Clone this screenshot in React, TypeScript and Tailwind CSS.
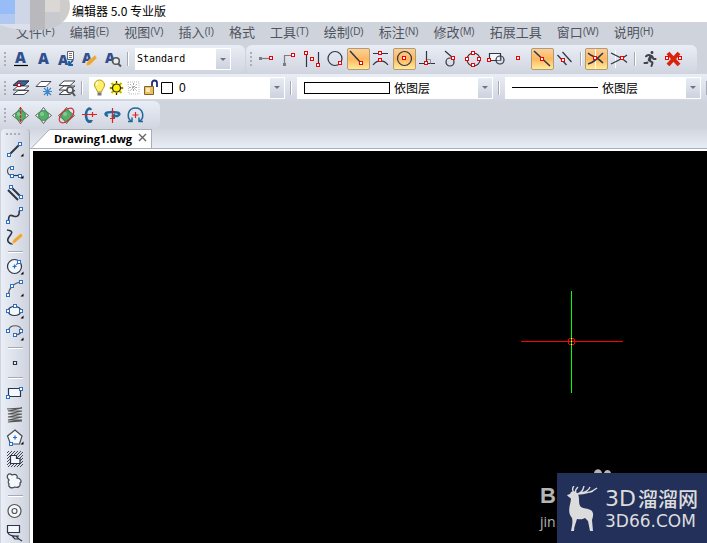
import React from 'react';
import { FaRunning } from 'react-icons/fa';
import { clsx } from 'clsx';

const INK = '#2c3646';
const BLUE = '#2f6fc0';

/* Snap handle, drawn as a hollow square centred on x/y */
const Dot = ({ x, y, c = '#f00000' }: { x: number; y: number; c?: string }) => (
  <rect x={x - 0.5} y={y - 0.5} width="3" height="3" fill="#fff" stroke={c} strokeWidth="1" />
);

const Node = ({ x, y }: { x: number; y: number }) => <Dot x={x - 1} y={y} c={BLUE} />;

const Glyph = ({ children }: { children: React.ReactNode }) => (
  <svg viewBox="0 0 23 22" width="23" height="22" fill="none" stroke={INK} strokeWidth="1.2" aria-hidden="true">
    {children}
  </svg>
);

interface Tool {
  name: string;
  icon: React.ReactNode;
  active?: boolean;
  flyout?: boolean;
}

const ToolButton = ({ tool }: { tool: Tool }) => (
  <button
    type="button"
    title={tool.name}
    aria-label={tool.name}
    className={clsx(
      'flex h-[22px] w-[23px] shrink-0 items-center justify-center',
      tool.active && 'rounded-xs bg-linear-to-b from-[#f9d3a0] via-[#fdb75c] to-[#fff0a0] outline -outline-offset-1 outline-[#b39a72]'
    )}
  >
    <Glyph>
      {tool.icon}
      {tool.flyout && <path d="M20.500 15.500v3h-3z" fill="#000" stroke="none" />}
    </Glyph>
  </button>
);

const Grip = () => (
  <div className="flex w-[9px] shrink-0 flex-col items-center gap-[2px]">
    {[0, 1, 2, 3].map((i) => (
      <span key={i} className="h-[2px] w-[2px] bg-[#a9aeb9]" />
    ))}
  </div>
);

const Divider = () => (
  <div className="flex w-2 shrink-0 justify-center">
    <span className="h-[14px] w-[2px] border-r border-l border-r-white border-l-[#a4a9b3]" />
  </div>
);

const A = ({ x = 6, y = 16, size = 15 }: { x?: number; y?: number; size?: number }) => (
  <text x={x} y={y} fontFamily="Open Sans, DejaVu Sans, sans-serif" fontWeight="800" fontSize={size} fill="#2f4f8e" stroke="none">
    A
  </text>
);

const Layers = () => (
  <g strokeWidth="1" stroke="#444b55" fill="#fff">
    <path d="M4 17.500h11l5-4H9z" />
    <path d="M4 13h11l5-4H9z" />
    <path d="M4 8.500h11l5-4.500H9z" />
  </g>
);

const textTools: Tool[] = [
  { name: 'Text style', icon: <><A y={15} /><path d="M5 17.500h14" stroke="#000" /></> },
  { name: 'Single line text', icon: <A /> },
  {
    name: 'Multiline text',
    icon: (
      <>
        <A x={3} y={17} size={14} />
        <path d="M12.500 3.500h6v8h-6z" fill="#fff" stroke="#666" strokeWidth="1" />
        <path d="M14 5.500h3M14 7.500h3M14 9.500h3" stroke="#777" strokeWidth="1" />
        <path d="M18 12l-4 5m0-4v4h4" stroke="#1d5f9e" strokeWidth="1.800" />
      </>
    ),
  },
  { name: 'Edit text', icon: <><A x={4} y={15} size={14} /><path d="M8 18l1-4 8-7 2 3-7 7z" fill="#eda63a" stroke="#f9dca8" strokeWidth="0.6" /></> },
  { name: 'Find text', icon: <><A x={4} y={15} size={14} /><circle cx="15" cy="13" r="3.300" fill="#e9eef5" stroke="#555" strokeWidth="1.500" /><path d="M17 15.500l3 3" stroke="#555" strokeWidth="2" /></> },
];

const snapTools: Tool[] = [
  { name: 'Snap tracking', icon: <><path d="M4 10.500h12" stroke="#7d7d7d" /><path d="M4 9h3v3H4z" fill="#7d7d7d" stroke="none" /><Dot x={15} y={9} /></> },
  { name: 'Snap from', icon: <><path d="M6.500 16V7.500H15" stroke="#7d7d7d" /><path d="M5 15h3v3H5z" fill="#7d7d7d" stroke="none" /><Dot x={14} y={6} /></> },
  { name: 'Mid between points', icon: <><path d="M5.500 5v14M17.500 4v13" /><Dot x={4} y={4} /><Dot x={10} y={10} /><Dot x={16} y={16} /></> },
  { name: 'Nearest', icon: <><circle cx="11" cy="10.500" r="7" /><Dot x={15} y={14} /></> },
  { name: 'Endpoint', active: true, icon: <><path d="M3 3l11 12" strokeWidth="1.500" /><Dot x={13} y={14} /></> },
  { name: 'Apparent intersection', icon: <><path d="M3 5.500h15M3 17c4-5.500 11-5.500 15 0" /><Dot x={9} y={4} /><Dot x={9} y={11} /></> },
  { name: 'Center', active: true, icon: <><circle cx="11.500" cy="10.500" r="7" /><Dot x={10} y={9} /></> },
  { name: 'Perpendicular', icon: <><path d="M3 15.500h16M10.500 3v12" /><path d="M11 11.500h3.500v4" stroke="#9a8f8c" strokeWidth="1" /><Dot x={9} y={14} /></> },
  { name: 'Tangent', icon: <><circle cx="11" cy="14" r="4" /><path d="M6 3l8 7" /><Dot x={13} y={9} /></> },
  { name: 'Quadrant', icon: <><circle cx="11.500" cy="11.500" r="6.500" /><Dot x={10} y={4} /><Dot x={4} y={10} /><Dot x={16} y={10} /><Dot x={10} y={16} /></> },
  { name: 'Insertion', icon: <><path d="M4.500 5.500h11v7h-11z" fill="#f4f6fa" /><circle cx="15" cy="12" r="4" /><path d="M12 12.500h4v-4" strokeWidth="1" stroke="#66707c" /><Dot x={3} y={11} /></> },
  { name: 'Node', icon: <Dot x={9} y={9} /> },
  { name: 'Nearest on line', active: true, icon: <><path d="M3 3l16 15" strokeWidth="1.500" /><Dot x={10} y={10} /></> },
  { name: 'Parallel', icon: <><path d="M3.500 7l9 10M8.500 4l9 10" /><Dot x={8} y={11} /></> },
];

const crossTools: Tool[] = [
  { name: 'Intersection', active: true, icon: <><path d="M10.500 1v20" stroke="#fff" strokeWidth="1" /><path d="M3 5c4 4 10 4 15 10M3 16c5-1 9-5 15-11" strokeWidth="1.500" /><Dot x={9} y={9} /></> },
  { name: 'Extension', icon: <><path d="M7.500 2v18" stroke="#fff" strokeWidth="1" /><path d="M3 5l11 5.500L3 16M19 7l-5 3.500 5 4" /><Dot x={13} y={9} /></> },
];

const snapEndTools: Tool[] = [
  { name: 'Quick snap', icon: <g stroke="none" color="#3e454c"><FaRunning x="3" y="3" width="16" height="16" size={16} /></g> },
  { name: 'No snap', icon: <><path d="M6 5l11 12M17 5L6 17" stroke="#d9240c" strokeWidth="4" /><Dot x={4} y={9} /><Dot x={17} y={9} /></> },
];

const layerTools: Tool[] = [
  { name: 'Layer manager', icon: <><Layers /><path d="M4 8.500h11l5-4.500H9z" fill="#2c67a8" strokeWidth="1" /><Dot x={9} y={7} /></> },
  {
    name: 'Freeze layer',
    icon: <><path d="M4 9.500h10l5-5H9z" fill="#fff" stroke="#444b55" strokeWidth="1" /><path d="M15.500 10v9M11 14.500h9M12 11l7 7M19 11l-7 7" stroke="#3d87cc" /></>,
  },
  { name: 'Search layers', icon: <><Layers /><circle cx="15" cy="13" r="3" fill="#e9eef5" stroke="#555" strokeWidth="1.600" /><path d="M17 15l3 4" stroke="#555" strokeWidth="2" /></> },
];

const Ball = () => (
  <>
    <path d="M11.500 3.500l3 4 5 4-5 4-3 4-3-4-5-4 5-4z" fill="#fff" stroke="#555" strokeWidth="1" />
    <circle cx="11.500" cy="11.500" r="5" fill="#55ae6a" stroke="#398b50" strokeWidth="1" />
    <circle cx="10" cy="10" r="2" fill="#80cb92" stroke="none" />
  </>
);

const orbitTools: Tool[] = [
  { name: 'Constrained orbit', icon: <><Ball /><path d="M11.500 3v17" stroke="#e02020" strokeDasharray="3 1" /></> },
  { name: 'Free orbit', icon: <Ball /> },
  { name: 'Continuous orbit', icon: <><Ball /><ellipse cx="11.500" cy="11.500" rx="9" ry="5" transform="rotate(-45 11.500 11.500)" stroke="#c83030" /></> },
  { name: 'Rotate X', icon: <><path d="M13 6c-1-3-5-1-5 5s4 9 5 5" stroke="#22699b" strokeWidth="2.500" /><path d="M10 16h5l-2 3z" fill="#22699b" stroke="none" /><path d="M4 10.500h15M14.500 8v5" stroke="#e02020" /></> },
  { name: 'Rotate Y', icon: <><path d="M7 12c-5-2-2-4 4.500-4s9 2 5 4h-4" stroke="#22699b" strokeWidth="2.500" /><path d="M14 9v6l-4-3z" fill="#22699b" stroke="none" /><path d="M11.500 4v15M9 14.500h5" stroke="#e02020" /></> },
  { name: 'Rotate Z', icon: <><path d="M7 17C2 13 4 4 11.500 4S21 13 16 17M4 17.500h4v-4M19 17.500h-4v-4" stroke="#22699b" strokeWidth="1.500" /><path d="M11.500 8v6M8.500 11h6" stroke="#e02020" /></> },
];

const drawGroups: Tool[][] = [
  [
    { name: 'Line', flyout: true, icon: <><path d="M6 17L18 5" strokeWidth="2" /><Node x={6} y={16} /><Node x={17} y={5} /></> },
    { name: 'Polyline', flyout: true, icon: <><path d="M9 7C3 7 3 15 9 15.500h8" stroke="#555" /><path d="M9 15.500h8" /><Node x={9} y={7} /><Node x={9} y={15} /><Node x={17} y={15} /></> },
    { name: 'Parallel lines', icon: <><path d="M8 5l10 10M5 8l10 10" strokeWidth="2" /><Node x={8} y={4} /><Node x={18} y={14} /></> },
    { name: 'Spline', icon: <><path d="M5.500 17c0-11 6-2 9-5 4-3-1-4 4-7" strokeWidth="1.600" /><Node x={5} y={17} /><Node x={18} y={4} /></> },
    { name: 'Freehand', icon: <><path d="M4 4c7 1 5 3 2 7s0 7 4 7" strokeWidth="1.600" /><path d="M9 18l1-4 8-7 2 3-8 7z" fill="#eda63a" stroke="#f9dca8" strokeWidth="0.6" /></> },
  ],
  [
    { name: 'Circle', flyout: true, icon: <><circle cx="11.500" cy="10.500" r="7" fill="#f4f7fc" /><path d="M11.500 10.500l5-5" stroke={BLUE} strokeDasharray="1.500 1" /><path d="M9.500 10.500h4M11.500 8.500v4" stroke={BLUE} /><Node x={16} y={5} /></> },
    { name: 'Arc', flyout: true, icon: <><path d="M5.500 17c0-6 4-12 13-13" stroke="#555" /><Node x={5} y={16} /><Node x={9} y={7} /><Node x={18} y={3} /></> },
    { name: 'Ellipse', flyout: true, icon: <><ellipse cx="11.500" cy="11" rx="6.500" ry="4.500" fill="#f4f7fc" /><Node x={5} y={10} /><Node x={12} y={5} /><Node x={18} y={10} /></> },
    { name: 'Elliptical arc', flyout: true, icon: <><path d="M5.500 9c0-7 13-7 13 0 0 2-3 3.500-6 4" stroke="#555" /><Node x={5} y={8} /><Node x={18} y={8} /><Node x={12} y={12} /></> },
  ],
  [{ name: 'Point', icon: <path d="M10.500 9.500h3v3h-3z" fill="#fff" /> }],
  [
    { name: 'Rectangle', icon: <><path d="M5.500 6.500h12v8h-12z" fill="#f4f7fc" /><Node x={5} y={14} /><Node x={18} y={6} /></> },
    { name: 'Hatch', icon: <path d="M4 5l15-1-14 3 14 0-14 3 14 0-14 3 14 0-14 3 14 0-14 2 14-1" stroke="#555" strokeWidth="1.200" /> },
    { name: 'Polygon', flyout: true, icon: <><path d="M12 4l7 6-2.500 8h-9L4.500 10z" fill="#f4f7fc" stroke="#444b55" /><path d="M10 11.500h4M12 9.500v4" stroke={BLUE} /><Node x={8} y={17} /></> },
    {
      name: 'Boundary',
      icon: (
        <>
          <pattern id="hatch" width="3" height="3" patternUnits="userSpaceOnUse">
            <path d="M0 3L3 0M-1 1l2-2M2 4l2-2" stroke={INK} strokeWidth="0.9" />
          </pattern>
          <path d="M4 3h16v16H4z" fill="url(#hatch)" stroke="none" />
          <path d="M7.500 7.500h6v3H17v5H7.500z" fill="#f4f7fc" />
        </>
      ),
    },
    { name: 'Revision cloud', icon: <path d="M6 10C2 6 6 2 9 5c4-2 6 1 5 3 4 0 5 4 3 5 1 4-3 5-5 4-4 2-7 0-6-3-1-1-1-3 0-4z" fill="#f4f7fc" stroke="#444b55" /> },
  ],
  [
    { name: 'Donut', icon: <><circle cx="11.500" cy="11" r="6.500" fill="#f4f7fc" stroke="#555" /><circle cx="11.500" cy="11" r="2.500" stroke="#555" /></> },
    { name: 'Wipeout', icon: <><path d="M4.500 3.500h12v7h-12z" fill="#f4f7fc" /><path d="M5 11c2 4 7 3 11 3M9 14l3 3h4l3 2M13 14l3 3" /></> },
  ],
];

const menus = [
  ['文件', '(F)'],
  ['编辑', '(E)'],
  ['视图', '(V)'],
  ['插入', '(I)'],
  ['格式', ''],
  ['工具', '(T)'],
  ['绘制', '(D)'],
  ['标注', '(N)'],
  ['修改', '(M)'],
  ['拓展工具', ''],
  ['窗口', '(W)'],
  ['说明', '(H)'],
];

const BAR = 'flex items-center bg-linear-to-b from-[#e9edf6] to-[#d0d5df]';

interface ComboProps {
  label: string;
  value: string;
  className: string;
  textClass: string;
  children?: React.ReactNode;
}

const Combo = ({ label, value, className, textClass, children }: ComboProps) => (
  <div className={clsx('relative flex h-[22px] items-center bg-white text-black', className)}>
    {children}
    <select aria-label={label} className={clsx('h-full min-w-0 flex-1 appearance-none bg-transparent outline-none', textClass)}>
      <option>{value}</option>
    </select>
    <span className="pointer-events-none absolute inset-y-px right-px flex w-[14px] items-center justify-center bg-linear-to-b from-[#e8ecf4] to-[#ccd2de]">
      <svg width="6" height="3" viewBox="0 0 6 3" aria-hidden="true">
        <path d="M0 0h6L3 3z" fill="#70737a" />
      </svg>
    </span>
  </div>
);

const LayerState = () => (
  <svg width="86" height="20" viewBox="0 0 86 20" fill="none" className="shrink-0" aria-hidden="true">
    <path d="M8.500 14C8 11 5.500 10 5.500 7a5 5 0 0110 0c0 3-2.500 4-3 7z" fill="#fdf06a" stroke="#b79a20" />
    <path d="M8.500 14.500h4v3h-4z" fill="#777" />
    <path d="M8.500 4c-1 1-1 2-1 3" stroke="#fff" strokeWidth="1.500" />
    <path d="M27.500 3v14M20.500 10h14M22.500 5l10 10M32.500 5l-10 10" stroke="#f7e800" strokeWidth="2.500" />
    <circle cx="27.500" cy="10" r="4" fill="#fff200" stroke="#222" strokeWidth="1.200" />
    <path d="M27.500 3v2M27.500 15v2M21 10h2M32 10h2M23 5.500l1 1M32 5.500l-1 1M23 14.500l1-1M32 14.500l-1-1" stroke="#222" />
    <path d="M39 4h11v12H40z" stroke="#bbb" strokeDasharray="1 1" />
    <path d="M44.500 5v9M40 9.500h9M41 6l7 7M48 6l-7 7" stroke="#aaa" strokeDasharray="2 1" />
    <path d="M63 9V5a2.500 2.500 0 015 0v4" stroke="#202c78" strokeWidth="1.800" />
    <path d="M55.500 8.500h9v8h-9z" fill="#e9bf69" stroke="#866224" />
    <path d="M57 10h4v4h-4z" fill="#ffe9b0" />
    <path d="M72.500 4.500h11v11h-11z" fill="#fff" stroke="#000" />
  </svg>
);

/* Pixelated cover over the application icon */
const Mosaic = () => (
  <svg className="absolute top-0 left-0" width="71" height="31" viewBox="0 0 71 31" aria-hidden="true">
    <clipPath id="cover">
      <path d="M0 0h69c3 12-3 22-14 27C42 31 18 32 0 25z" />
    </clipPath>
    <g clipPath="url(#cover)">
      <path d="M0 0h71v31H0z" fill="#cfd1d8" />
      <path d="M0 0h15v14H0z" fill="#98bcf6" />
      <path d="M0 14h15v10H0z" fill="#b1c9f0" />
      <path d="M15 0h15v31H15z" fill="#cfd6e8" />
      <path d="M30 0h15v31H30z" fill="#b9b8bd" />
      <path d="M45 0h15v12H45z" fill="#dad7d4" />
      <path d="M45 12h15v19H45z" fill="#c9cad0" />
      <path d="M60 0h11v31H60z" fill="#cfcdcb" />
      <path d="M0 24h30v7H0z" fill="#dbe0ec" />
    </g>
  </svg>
);

const Watermark = () => (
  <div className="absolute right-0 bottom-0 flex items-end">
    <div className="w-[17px] text-[#b5b5b5]">
      <div className="font-['Liberation_Sans'] text-[22px] leading-8 font-bold">B</div>
      <div className="pb-3 font-['Open_Sans'] text-[14px] leading-5">jin</div>
    </div>
    <div className="relative flex h-[71px] w-[150px] items-center bg-[#22305a] text-[#dcdcdc]">
      <svg className="absolute -top-1 left-9" width="22" height="4" viewBox="0 0 22 4" aria-hidden="true">
        <path d="M1 4c1-5 7-5 8 0zM11 4c1-4 6-4 7 0z" fill="#b5b5b5" />
      </svg>
      <svg className="ml-2 shrink-0" width="34" height="46" viewBox="0 0 34 46" aria-hidden="true">
        <path
          d="M2 9l3-1 1-2 3-1 4 3c2 5 0 10 3 13 3 2 8 1 11 4 2 3 1 6 0 9l1 11h-3l-2-10-3-3c-3 2-6 1-8 1-1 4-3 7-3 12H6c1-5 2-9 1-13-5-6-2-12-1-19-1-2-3-2-4-4z"
          fill="currentColor"
        />
        <path d="M9 7C7 4 7 2 9 0M11 8c-1-4 0-5 2-7M11 8c4 0 7-3 8-8M12 8c7 0 15-2 20-6M16 7c5-1 8-3 9-6M20 6c3 1 6 0 8-1" fill="none" stroke="currentColor" strokeWidth="1.400" />
      </svg>
      <div className="ml-[6px] whitespace-nowrap">
        <div className="flex items-center gap-[2px] leading-6">
          <span className="font-['DejaVu_Sans'] text-[22px]">3D</span>
          <span className="font-['Noto_Sans_CJK_SC'] text-[20px] font-medium">溜溜网</span>
        </div>
        <div className="font-['DejaVu_Sans'] text-[17px] leading-5">3D66.COM</div>
      </div>
    </div>
  </div>
);

const App: React.FC = () => (
  <div className="relative flex min-h-screen flex-col overflow-hidden bg-[#cfd3dc] font-['Liberation_Sans','Noto_Sans_CJK_SC',sans-serif] text-xs">
    {/* Title bar */}
    <header className="flex h-[22px] items-center bg-white pl-[72px] font-['Noto_Sans_CJK_SC',sans-serif] text-black">
      <h1>编辑器 5.0 专业版</h1>
    </header>

    {/* Menu bar */}
    <nav className="flex h-[23px] items-start gap-[15px] pl-4 whitespace-nowrap text-[#50545f]">
      {menus.map(([label, key]) => (
        <button key={label} type="button" className="flex items-center">
          <span className="font-['Noto_Sans_CJK_SC',sans-serif] text-[13px] leading-5">{label}</span>
          {key && <span className="text-[10px] leading-5">{key}</span>}
        </button>
      ))}
    </nav>
    <Mosaic />

    {/* Toolbars */}
    <div className="flex h-7">
      <div className={clsx(BAR, 'w-[245px] shrink-0 rounded-r-md')}>
        <Grip />
        {textTools.map((t) => <ToolButton key={t.name} tool={t} />)}
        <Divider />
        <Combo label="Text style" value="Standard" className="ml-[3px] w-24" textClass="pl-[2px] font-['DejaVu_Sans_Mono'] text-[10px]" />
      </div>
      <div className={clsx(BAR, 'ml-px rounded-md pr-3')}>
        <Grip />
        {snapTools.map((t) => <ToolButton key={t.name} tool={t} />)}
        <Divider />
        {crossTools.map((t) => <ToolButton key={t.name} tool={t} />)}
        <Divider />
        {snapEndTools.map((t) => <ToolButton key={t.name} tool={t} />)}
      </div>
    </div>

    <div className={clsx(BAR, 'h-7 border-t border-[#d0d4dd]')}>
      <Grip />
      {layerTools.map((t) => <ToolButton key={t.name} tool={t} />)}
      <Divider />
      <Combo label="Layer" value="0" className="ml-[3px] flex-1" textClass="pl-1 text-xs">
        <LayerState />
      </Combo>
      <div className="ml-[2px]"><Divider /></div>
      <Combo label="Color" value="依图层" className="ml-[2px] flex-1" textClass="pl-1 font-['Noto_Sans_CJK_SC'] text-xs">
        <span className="ml-[7px] h-3 w-[86px] shrink-0 border border-black" />
      </Combo>
      <div className="ml-[2px]"><Divider /></div>
      <Combo label="Line type" value="依图层" className="ml-[2px] flex-1" textClass="pl-1 font-['Noto_Sans_CJK_SC'] text-xs">
        <span className="ml-[7px] h-px w-[86px] shrink-0 bg-black" />
      </Combo>
      <div className="ml-[2px] w-1 overflow-hidden"><Divider /></div>
    </div>

    <div className="flex h-7">
      <div className={clsx(BAR, 'rounded-r-md pr-[13px]')}>
        <Grip />
        {orbitTools.map((t) => <ToolButton key={t.name} tool={t} />)}
      </div>
    </div>

    {/* Workspace */}
    <main className="flex flex-1">
      <aside className="ml-px w-[29px] shrink-0 rounded-t-sm border-r border-[#a9afba] bg-linear-to-r from-[#eaeef6] to-[#ced3de] pl-[2px]">
        <div className="flex h-[9px] items-center gap-[2px] pl-[3px]">
          {[0, 1, 2, 3].map((i) => (
            <span key={i} className="h-[2px] w-[2px] bg-[#a9aeb9]" />
          ))}
        </div>
        {drawGroups.map((group, i) => (
          <React.Fragment key={i}>
            {i > 0 && (
              <div className="flex h-2 items-center pl-[5px]">
                <span className="h-[2px] w-[15px] border-t border-b border-t-[#a4a9b3] border-b-white" />
              </div>
            )}
            {group.map((t) => <ToolButton key={t.name} tool={t} />)}
          </React.Fragment>
        ))}
      </aside>

      <section className="flex min-w-0 flex-1 flex-col">
        <div className="flex h-5 items-end border-b border-[#a9afba] bg-linear-to-b from-[#d2d6df] to-[#e8ecf4]">
          <svg width="21" height="19" viewBox="0 0 21 19" aria-hidden="true">
            <path d="M2 19L18 2q1-1.500 3-1.500V19z" fill="#fff" />
            <path d="M2 18.500L18 2q1-1.500 3-1.500" fill="none" stroke="#a9afba" />
          </svg>
          <div className="flex h-[19px] items-center gap-[6px] border-t border-r border-[#a9afba] bg-white pr-1 pl-[3px]">
            <span className="font-['Open_Sans'] text-[11px] leading-4 font-bold text-black">Drawing1.dwg</span>
            <button type="button" aria-label="Close drawing" className="pb-1">
              <svg width="9" height="9" viewBox="0 0 9 9" stroke="#666" strokeWidth="1.400" aria-hidden="true">
                <path d="M1 1l7 7M8 1L1 8" />
              </svg>
            </button>
          </div>
        </div>
        <div className="flex flex-1 border-t-2 border-l-[3px] border-white">
          <div className="relative flex-1 bg-black">
            <svg className="absolute top-[140px] left-[488px]" width="102" height="102" viewBox="0 0 102 102" shapeRendering="crispEdges" aria-label="Cursor">
              <path d="M0 50.500h102" stroke="#f00" />
              <path d="M50.500 0v102" stroke="#0f0" />
              <path d="M48 47.500h5M48 53.500h5M47.500 48v5M53.500 48v5" stroke="#f00" />
              <path d="M50 47h1v1h-1zM50 50h1v1h-1zM50 53h1v1h-1z" fill="#ff0" />
            </svg>
            <Watermark />
          </div>
        </div>
      </section>
    </main>
  </div>
);

export default App;
